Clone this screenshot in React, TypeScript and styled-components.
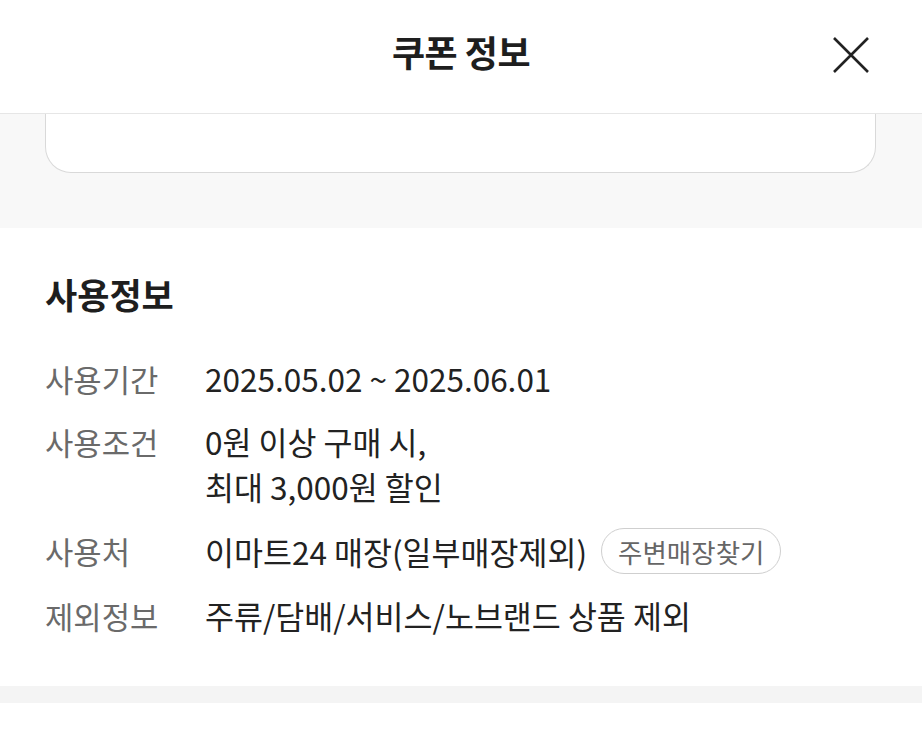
import styled, { createGlobalStyle } from 'styled-components';

const GlobalStyle = createGlobalStyle`
  html, body {
    margin: 0;
    padding: 0;
    background: #ffffff;
  }
  body {
    font-family: 'Noto Sans CJK KR', 'Noto Sans', sans-serif;
    color: #222;
  }
`;

const Page = styled.div`
  width: 922px;
  min-height: 750px;
  background: #fff;
`;

const Header = styled.header`
  height: 114px;
  box-sizing: border-box;
  padding-bottom: 12px;
  border-bottom: 1px solid #e6e6e6;
  display: flex;
  align-items: center;
  justify-content: center;
  position: relative;
`;

const HeaderTitle = styled.h1`
  margin: 0;
  font-size: 36px;
  font-weight: 700;
  letter-spacing: -0.5px;
  color: #1e1e1e;
`;

const CloseButton = styled.button`
  position: absolute;
  right: 52px;
  top: 36px;
  width: 38px;
  height: 38px;
  padding: 0;
  border: none;
  background: none;
  cursor: pointer;
`;

const TopArea = styled.div`
  background: #f8f8f8;
  padding: 0 46px 55px 45px;
`;

const CouponCard = styled.div`
  height: 58px;
  background: #fff;
  border: 1px solid #d9d9d9;
  border-top: none;
  border-radius: 0 0 26px 26px;
`;

const InfoSection = styled.section`
  padding: 43px 45px 48px;
`;

const SectionTitle = styled.h2`
  margin: 0 0 40px;
  font-size: 35px;
  line-height: 45px;
  font-weight: 700;
  color: #1e1e1e;
`;

const InfoList = styled.dl`
  margin: 0;
  display: flex;
  flex-direction: column;
  gap: 18px;
`;

const InfoRow = styled.div`
  display: flex;
  align-items: flex-start;
`;

const Label = styled.dt<{ $tall?: boolean }>`
  width: 160px;
  flex-shrink: 0;
  font-size: 30.8px;
  line-height: ${(p) => (p.$tall ? '48px' : '45px')};
  color: #6a6a6a;
`;

const Value = styled.dd<{ $tall?: boolean }>`
  margin: 0;
  min-height: ${(p) => (p.$tall ? '48px' : '45px')};
  font-size: 31.5px;
  line-height: 45px;
  color: #222;
  display: flex;
  align-items: center;
  flex-wrap: wrap;
`;

const StoreButton = styled.button`
  margin-left: 14px;
  height: 46px;
  padding: 0 16px;
  border: 1px solid #cfcfcf;
  border-radius: 23px;
  background: #fff;
  font-family: inherit;
  font-size: 26.5px;
  color: #666;
  cursor: pointer;
`;

const Divider = styled.div`
  height: 17px;
  background: #f4f4f4;
`;

const rows = [
  { label: '사용기간', value: ['2025.05.02 ~ 2025.06.01'] },
  { label: '사용조건', value: ['0원 이상 구매 시,', '최대 3,000원 할인'] },
  { label: '사용처', value: ['이마트24 매장(일부매장제외)'], button: '주변매장찾기' },
  { label: '제외정보', value: ['주류/담배/서비스/노브랜드 상품 제외'] },
];

const App = () => {
  return (
    <Page>
      <GlobalStyle />
      <Header>
        <HeaderTitle>쿠폰 정보</HeaderTitle>
        <CloseButton aria-label="닫기">
          <svg width="38" height="38" viewBox="0 0 38 38">
            <path d="M2 2 L36 36 M36 2 L2 36" stroke="#222" strokeWidth="2.6" fill="none" />
          </svg>
        </CloseButton>
      </Header>
      <TopArea>
        <CouponCard />
      </TopArea>
      <InfoSection>
        <SectionTitle>사용정보</SectionTitle>
        <InfoList>
          {rows.map((row) => (
            <InfoRow key={row.label}>
              <Label $tall={!!row.button}>{row.label}</Label>
              <Value $tall={!!row.button}>
                {row.value.length > 1 ? (
                  <span>
                    {row.value[0]}
                    <br />
                    {row.value[1]}
                  </span>
                ) : (
                  <span>{row.value[0]}</span>
                )}
                {row.button && <StoreButton>{row.button}</StoreButton>}
              </Value>
            </InfoRow>
          ))}
        </InfoList>
      </InfoSection>
      <Divider />
    </Page>
  );
};

export default App;
